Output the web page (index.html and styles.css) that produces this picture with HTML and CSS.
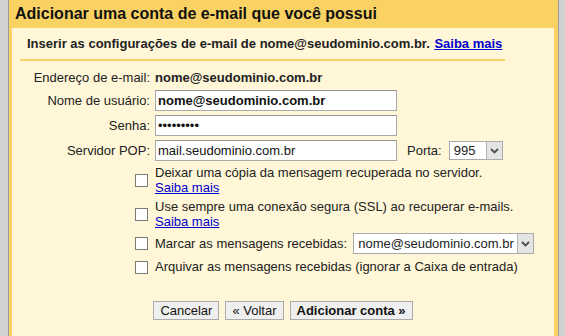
FILE: index.html
```html
<!DOCTYPE html>
<html lang="pt-BR">
<head>
    <meta charset="UTF-8">
    <title>Adicionar conta de e-mail</title>
    <link rel="stylesheet" href="styles.css">
</head>
<body>

    <div class="dialog">
        <div class="title">Adicionar uma conta de e-mail que você possui</div>

        <div class="content">
            <!-- Intro -->
            <div class="intro">
                Inserir as configurações de e-mail de nome@seudominio.com.br. <a href="#">Saiba mais</a>
            </div>

            <!-- Account settings -->
            <form class="form">
                <span class="lbl">Endereço de e-mail:</span>
                <span class="value">nome@seudominio.com.br</span>

                <label class="lbl" for="user">Nome de usuário:</label>
                <input class="field bold" id="user" type="text" value="nome@seudominio.com.br">

                <label class="lbl" for="pass">Senha:</label>
                <input class="field" id="pass" type="password" value="123456789">

                <label class="lbl" for="pop">Servidor POP:</label>
                <div class="inline">
                    <input class="field" id="pop" type="text" value="mail.seudominio.com.br">
                    <span class="port-label">Porta:</span>
                    <div class="select port">
                        <span class="select-text">995</span>
                        <span class="arrow"><svg width="9" height="6" viewBox="0 0 9 6"><path d="M1 1 L4.5 4.5 L8 1" fill="none" stroke="#4d4d4d" stroke-width="1.8"/></svg></span>
                    </div>
                </div>

                <input class="check" type="checkbox">
                <div class="opt">Deixar uma cópia da mensagem recuperada no servidor.<br><a href="#">Saiba mais</a></div>

                <input class="check" type="checkbox">
                <div class="opt">Use sempre uma conexão segura (SSL) ao recuperar e-mails.<br><a href="#">Saiba mais</a></div>

                <input class="check" type="checkbox">
                <div class="inline">
                    <span class="opt">Marcar as mensagens recebidas:</span>
                    <div class="select label-select">
                        <span class="select-text">nome@seudominio.com.br</span>
                        <span class="arrow"><svg width="9" height="6" viewBox="0 0 9 6"><path d="M1 1 L4.5 4.5 L8 1" fill="none" stroke="#4d4d4d" stroke-width="1.8"/></svg></span>
                    </div>
                </div>

                <input class="check last" type="checkbox">
                <div class="opt last">Arquivar as mensagens recebidas (ignorar a Caixa de entrada)</div>
            </form>

            <!-- Actions -->
            <div class="buttons">
                <button type="button">Cancelar</button>
                <button type="button">« Voltar</button>
                <button type="button" class="primary">Adicionar conta »</button>
            </div>
        </div>
    </div>

</body>
</html>
```

FILE: styles.css
```css
body {
    margin: 0;
    padding: 0 6px 0 8px;
    background: #d2d2d2;
    font-family: "Liberation Sans", Arial, sans-serif;
    font-size: 13px;
    color: #222;
}

.dialog {
    height: 336px;
    background: #fad163;
    border-left: 1px solid #9a9a9a;
    border-right: 1px solid #9a9a9a;
    padding: 0 4px 0 3px;
    display: flex;
    flex-direction: column;
}

.title {
    height: 28px;
    line-height: 28px;
    padding-left: 3px;
    font-size: 16px;
    font-weight: bold;
    color: #111;
}

.content {
    flex-grow: 1;
    background: #fff7d7;
}

a {
    color: #0000cc;
    text-decoration: underline;
}

.intro {
    width: 478px;
    margin-left: 8px;
    padding: 8px 0 8px 7px;
    line-height: 15px;
    font-weight: bold;
    border-bottom: 2px solid #fad163;
}

.intro a {
    margin-left: 1px;
}

/* settings grid */
.form {
    display: grid;
    grid-template-columns: 138px auto;
    column-gap: 5px;
    row-gap: 4px;
    margin-top: 9px;
}

.lbl {
    text-align: right;
    align-self: center;
    line-height: 16px;
}

.value {
    font-weight: bold;
    line-height: 16px;
}

.field {
    box-sizing: border-box;
    width: 242px;
    height: 21px;
    margin: 0;
    padding: 0 2px;
    border: 1px solid #a9a9a9;
    border-top-color: #959595;
    background: #fff;
    font-family: "Liberation Sans", Arial, sans-serif;
    font-size: 13px;
    color: #111;
}

.field.bold {
    font-weight: bold;
}

.inline {
    display: flex;
    align-items: center;
}

.port-label {
    margin-left: 10px;
    margin-right: 7px;
}

.select {
    box-sizing: border-box;
    display: flex;
    align-items: center;
    background: #fff;
    border: 1px solid #a9a9a9;
}

.select-text {
    flex-grow: 1;
    padding-left: 4px;
}

.port {
    width: 54px;
    height: 19px;
}

.label-select {
    width: 181px;
    height: 21px;
    margin-left: 6px;
}

.arrow {
    box-sizing: border-box;
    width: 16px;
    height: 100%;
    display: flex;
    align-items: center;
    justify-content: center;
    background: #e4e4e4;
    border-left: 1px solid #b4b4b4;
}

.check {
    appearance: none;
    box-sizing: border-box;
    width: 13px;
    height: 13px;
    margin: 0 2px 0 0;
    justify-self: end;
    align-self: center;
    border: 1px solid #7a7a7a;
    background: #fff;
}

.opt {
    line-height: 15px;
}

.last {
    margin-top: 1px;
}

.check.last {
    margin-top: 3px;
}

.buttons {
    display: flex;
    justify-content: center;
    gap: 6px;
    margin-top: 27px;
}

.buttons button {
    height: 19px;
    padding: 0 6px;
    border: 1px solid #ababab;
    background: #efefef;
    font-family: "Liberation Sans", Arial, sans-serif;
    font-size: 13px;
    color: #111;
    cursor: pointer;
}

.buttons .primary {
    font-weight: bold;
}
```
